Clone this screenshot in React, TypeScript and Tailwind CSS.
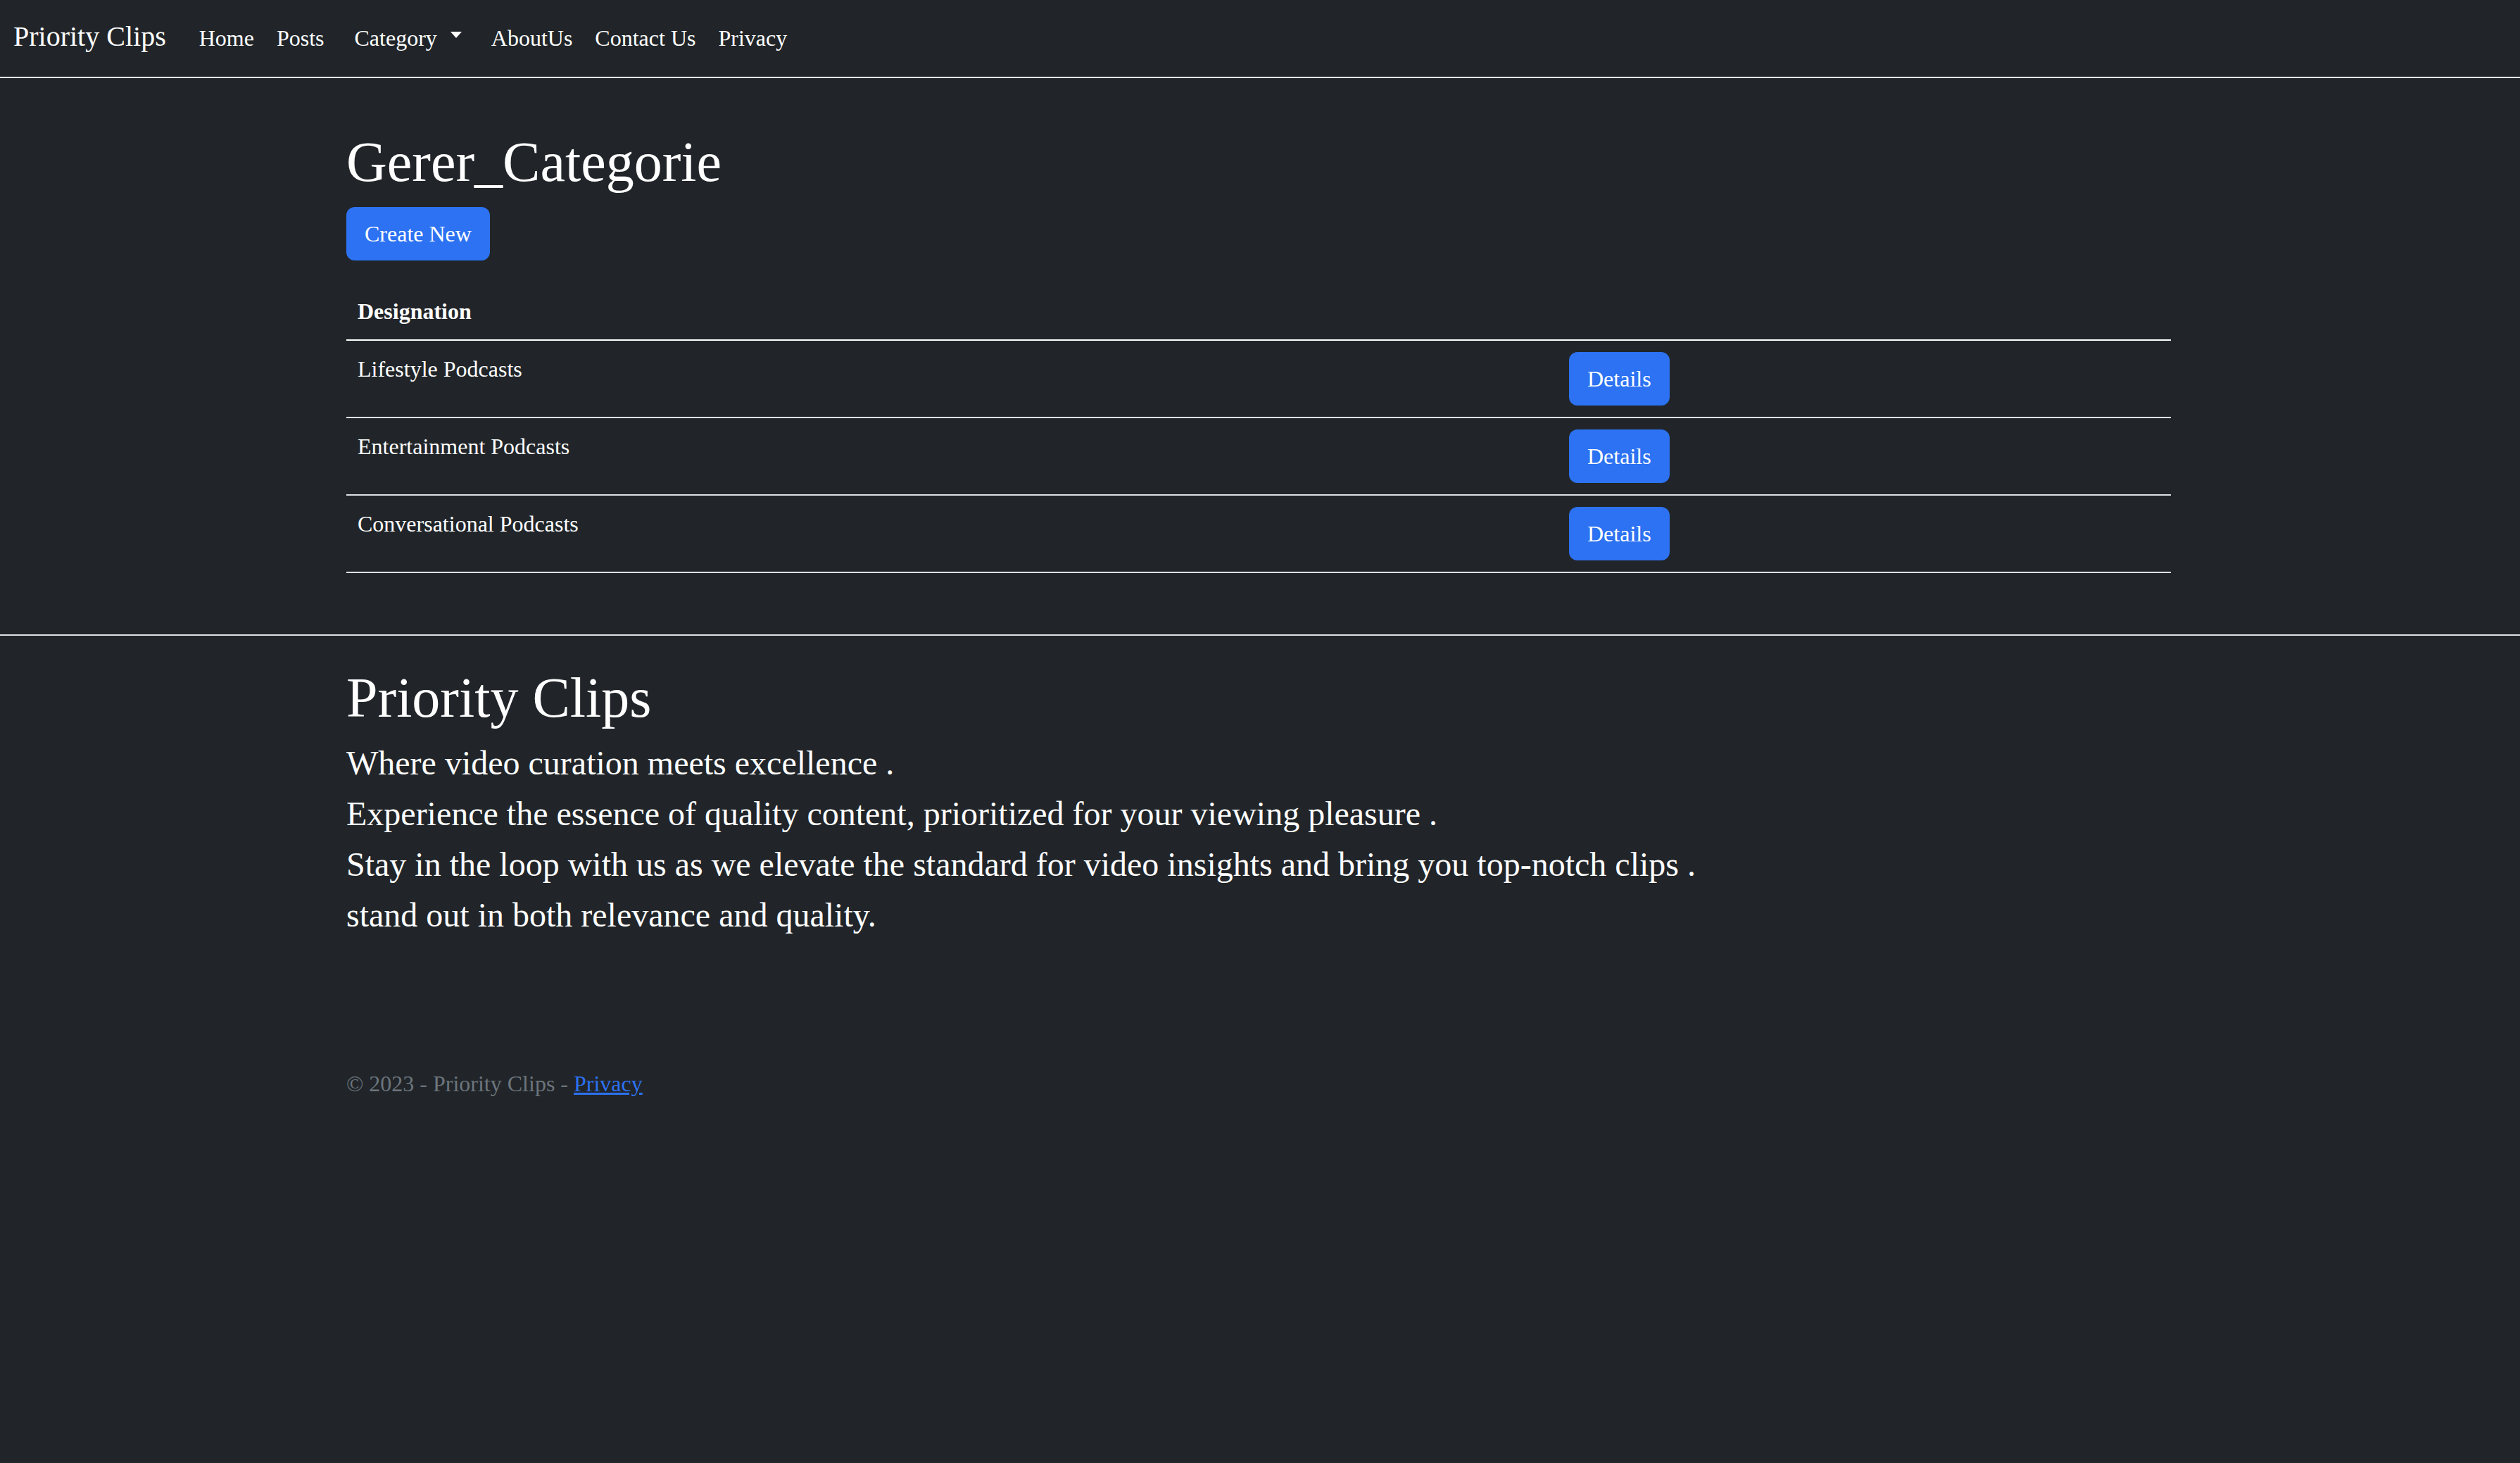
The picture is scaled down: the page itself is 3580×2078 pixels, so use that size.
import React from "react";

const categories = ["Lifestyle Podcasts", "Entertainment Podcasts", "Conversational Podcasts"];

function NavBar() {
    return (
        <nav className="h-[111px] border-b-2 border-white flex items-baseline pt-[22px] pl-[19px]">
            <a className="text-[40px] leading-[60px] mr-[31px]">Priority Clips</a>
            <a className="text-[32px] leading-[48px] px-[16px]">Home</a>
            <a className="text-[32px] leading-[48px] px-[16px]">Posts</a>
            <a className="text-[32px] leading-[48px] px-[16px] ml-[11px] mr-[10px]">
                Category
                <span className="inline-block w-0 h-0 ml-[19px] border-t-[9px] border-x-[8.5px] border-x-transparent border-t-white align-[0.33em]" />
            </a>
            <a className="text-[32px] leading-[48px] px-[16px]">AboutUs</a>
            <a className="text-[32px] leading-[48px] px-[16px]">Contact Us</a>
            <a className="text-[32px] leading-[48px] px-[16px]">Privacy</a>
        </nav>
    );
}

function CategoryTable() {
    return (
        <div className="grid grid-cols-[1721px_1fr] mt-[32px]">
            <div className="px-[16px] py-[16px] text-[32px] leading-[48px] font-bold border-b-2 border-white">Designation</div>
            <div className="border-b-2 border-white" />
            {categories.map((name) => (
                <React.Fragment key={name}>
                    <div className="px-[16px] py-[16px] text-[32px] leading-[48px] border-b-2 border-[#dee2e6]">{name}</div>
                    <div className="px-[16px] py-[16px] border-b-2 border-[#dee2e6]">
                        <button className="bg-[#2c72f2] text-white text-[32px] leading-[48px] px-[26px] py-[14px] rounded-[12px]">Details</button>
                    </div>
                </React.Fragment>
            ))}
        </div>
    );
}

export default function App() {
    return (
        <div className="min-h-screen bg-[#212529] text-white font-['Liberation_Serif',serif]">
            <NavBar />

            <div className="w-[2592px] ml-[492px]">
                <h1 className="text-[80px] leading-[96px] mt-[71px] font-normal">Gerer_Categorie</h1>
                <button className="mt-[16px] bg-[#2c72f2] text-white text-[32px] leading-[48px] px-[26px] py-[14px] rounded-[12px]">Create New</button>
                <CategoryTable />
            </div>

            <footer className="mt-[87px] border-t-2 border-[#dee2e6]">
                <div className="w-[2592px] ml-[492px] pt-[40px]">
                    <h1 className="text-[80px] leading-[96px] font-normal">Priority Clips</h1>
                    <p className="mt-[9px] text-[48px] leading-[72px]">
                        Where video curation meets excellence .<br />
                        Experience the essence of quality content, prioritized for your viewing pleasure .<br />
                        Stay in the loop with us as we elevate the standard for video insights and bring you top-notch clips .<br />
                        stand out in both relevance and quality.
                    </p>
                    <p className="mt-[179px] text-[32px] leading-[48px] text-[#6c757d]">
                        © 2023 - Priority Clips - <a className="text-[#2c72f2] underline">Privacy</a>
                    </p>
                </div>
            </footer>
        </div>
    );
}
